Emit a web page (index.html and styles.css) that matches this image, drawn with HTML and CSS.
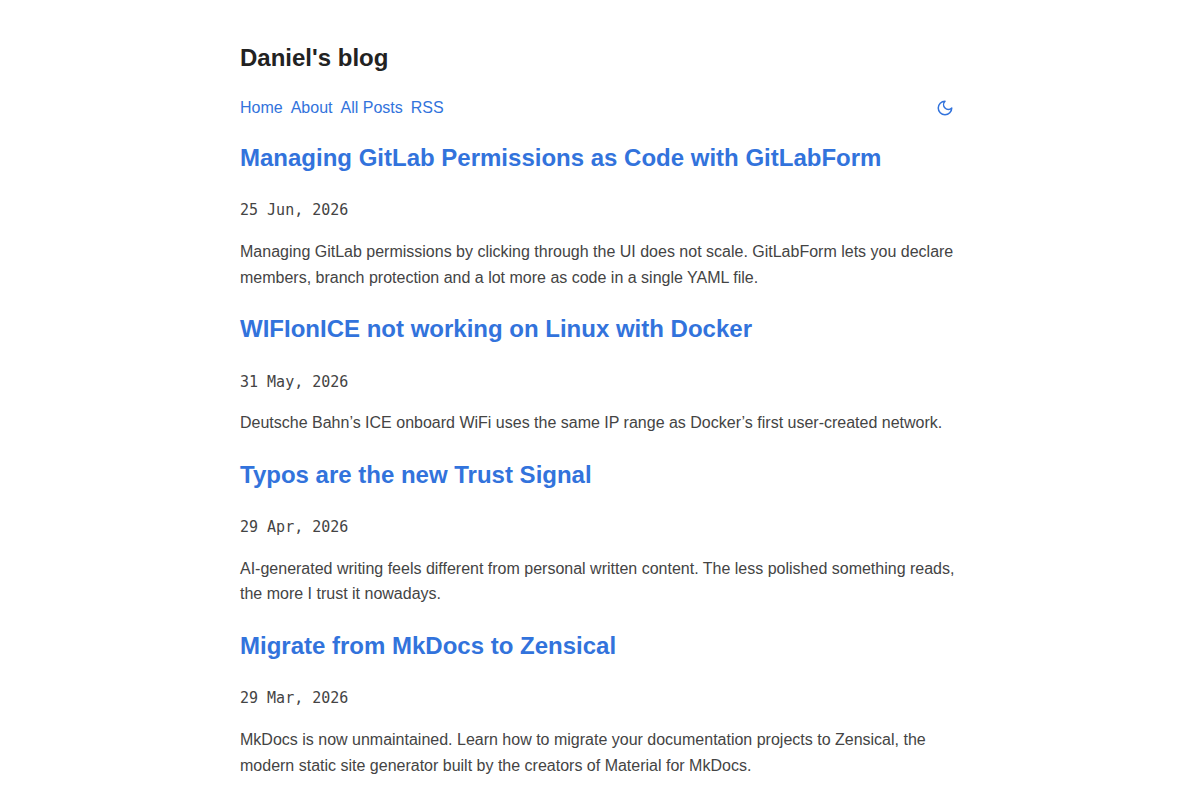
FILE: index.html
```html
<!DOCTYPE html>
<html lang="en">
<head>
  <meta charset="UTF-8">
  <meta name="viewport" content="width=device-width, initial-scale=1.0">
  <title>Daniel's blog</title>
  <link rel="stylesheet" href="styles.css">
</head>
<body>
  <header>
    <a class="title" href="/"><h1>Daniel's blog</h1></a>
    <nav>
      <a href="/">Home</a>
      <a href="/about/">About</a>
      <a href="/posts/">All Posts</a>
      <a href="/index.xml">RSS</a>
      <button id="theme-toggle" type="button" aria-label="Toggle theme">
        <svg viewBox="0 0 24 24" width="18" height="18">
          <path d="M12 3a6 6 0 0 0 9 9 9 9 0 1 1-9-9z"/>
        </svg>
      </button>
    </nav>
  </header>

  <main>
    <article>
      <h2><a href="/gitlabform/">Managing GitLab Permissions as Code with GitLabForm</a></h2>
      <p><time datetime="2026-06-25">25 Jun, 2026</time></p>
      <p>Managing GitLab permissions by clicking through the UI does not scale. GitLabForm lets you declare members, branch protection and a lot more as code in a single YAML file.</p>
    </article>

    <article>
      <h2><a href="/wifionice/">WIFIonICE not working on Linux with Docker</a></h2>
      <p><time datetime="2026-05-31">31 May, 2026</time></p>
      <p>Deutsche Bahn’s ICE onboard WiFi uses the same IP range as Docker’s first user-created network.</p>
    </article>

    <article>
      <h2><a href="/typos/">Typos are the new Trust Signal</a></h2>
      <p><time datetime="2026-04-29">29 Apr, 2026</time></p>
      <p>AI-generated writing feels different from personal written content. The less polished something reads, the more I trust it nowadays.</p>
    </article>

    <article>
      <h2><a href="/zensical/">Migrate from MkDocs to Zensical</a></h2>
      <p><time datetime="2026-03-29">29 Mar, 2026</time></p>
      <p>MkDocs is now unmaintained. Learn how to migrate your documentation projects to Zensical, the modern static site generator built by the creators of Material for MkDocs.</p>
    </article>
  </main>
</body>
</html>
```
FILE: styles.css
```css
body {
  max-width: 720px;
  margin: 0 auto;
  padding: 20px;
  font-family: "Liberation Sans", Arial, sans-serif;
  font-size: 16px;
  line-height: 1.6;
  color: #444;
  background: #fff;
}

a {
  color: #3273dc;
  text-decoration: none;
}

a:hover {
  text-decoration: underline;
}

h1, h2 {
  margin: 20px 0;
  font-size: 24px;
  color: #222;
}

h1 {
  line-height: 36px;
}

nav {
  display: flex;
  align-items: center;
  gap: 8px;
  line-height: 23px;
}

#theme-toggle {
  display: flex;
  margin-left: auto;
  padding: 0 6px;
  border: none;
  background: none;
  color: #3273dc;
  cursor: pointer;
}

#theme-toggle svg {
  fill: none;
  stroke: currentColor;
  stroke-width: 2;
  stroke-linecap: round;
  stroke-linejoin: round;
}

time {
  font-family: "DejaVu Sans Mono", monospace;
  font-size: 15px;
}

article p {
  margin: 16px 0;
}
```
